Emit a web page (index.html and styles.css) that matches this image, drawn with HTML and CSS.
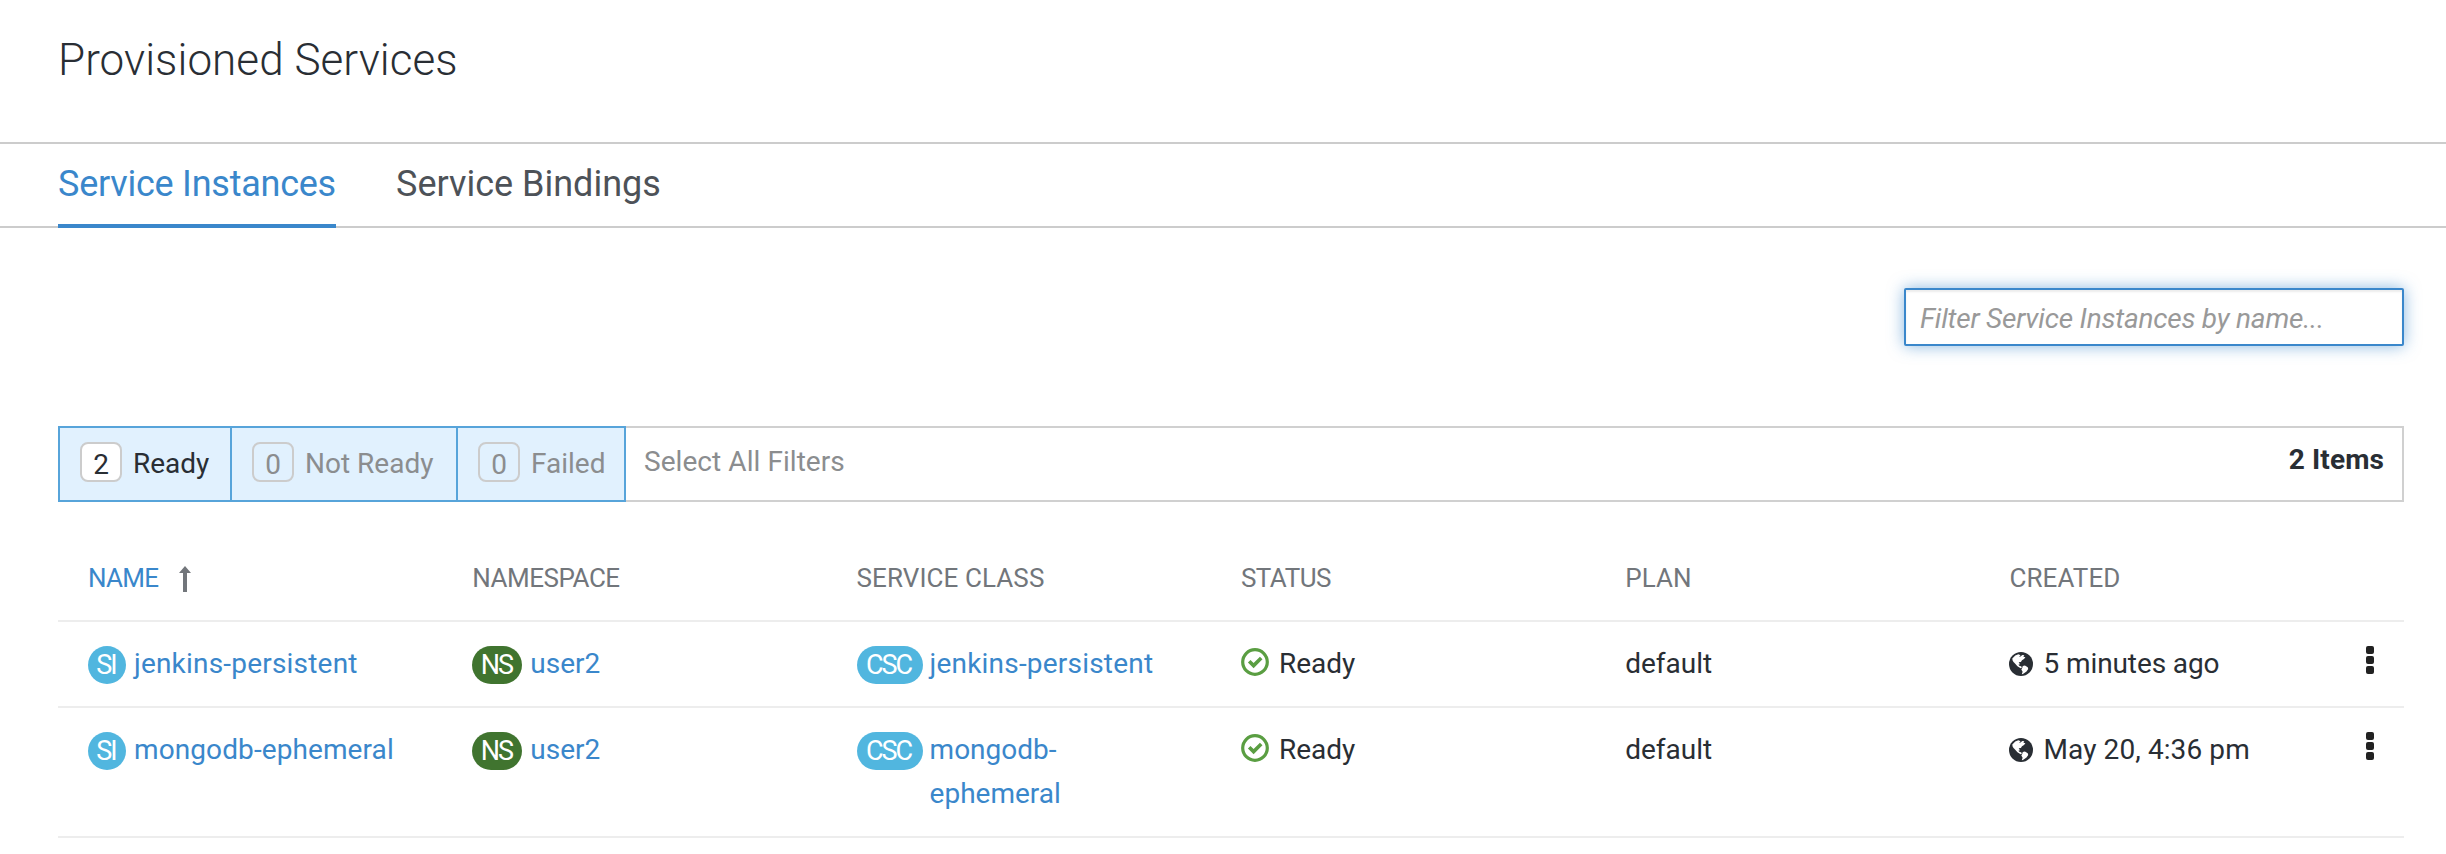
FILE: index.html
```
<!DOCTYPE html>
<html lang="en">
<head>
<meta charset="utf-8">
<title>Provisioned Services</title>
<link rel="stylesheet" href="styles.css">
</head>
<body>
<svg class="sprite" aria-hidden="true">
  <symbol id="check" viewBox="0 0 28 28">
    <circle cx="14" cy="14" r="12.3" fill="none" stroke="currentColor" stroke-width="3.2"/>
    <path d="M8.2 13.2l4.4 4.4 7.6-7.6" fill="none" stroke="currentColor" stroke-width="3.6"/>
  </symbol>
  <symbol id="globe" viewBox="0 0 1536 1536">
    <circle cx="768" cy="768" r="768" fill="currentColor"/>
    <path fill="#fff" d="M210 420L400 230 600 150 740 200 640 300 740 290 850 190 980 210 920 300 1050 340 960 440 830 530 760 640 620 660 700 780 600 820 680 900 780 910 820 1000 740 1040 540 910 400 750 290 640 230 540zM880 900L1020 870 1200 970 1230 1080 1120 1240 890 1400 820 1430 870 1260 790 1120 850 1010z"/>
  </symbol>
</svg>
<header class="page-header"><h1 class="title">Provisioned Services</h1></header>
<nav class="tabs">
  <a class="tab tab-active">Service Instances</a>
  <a class="tab">Service Bindings</a>
</nav>
<main class="content">
  <div class="toolbar"><input class="filter" type="text" placeholder="Filter Service Instances by name..."></div>
  <div class="filter-bar">
    <div class="status-filter on"><span class="count">2</span><span>Ready</span></div>
    <div class="status-filter second"><span class="count">0</span><span>Not Ready</span></div>
    <div class="status-filter third"><span class="count">0</span><span>Failed</span></div>
    <a class="select-all">Select All Filters</a>
    <span class="total">2 Items</span>
  </div>
  <div class="table">
    <div class="row head">
      <div class="cell sorted"><span class="label">NAME</span><svg class="arrow" viewBox="0 0 12 26"><path d="M6 0L12 7H8V26H4V7H0z" fill="currentColor"/></svg></div>
      <div class="cell">NAMESPACE</div>
      <div class="cell wide">SERVICE CLASS</div>
      <div class="cell">STATUS</div>
      <div class="cell wide">PLAN</div>
      <div class="cell wide">CREATED</div>
    </div>
    <div class="row">
      <div class="cell"><span class="badge si">SI</span><a class="link jenkins">jenkins-persistent</a></div>
      <div class="cell"><span class="badge ns">NS</span><a class="link">user2</a></div>
      <div class="cell"><span class="badge csc">CSC</span><a class="link jenkins">jenkins-persistent</a></div>
      <div class="cell"><svg class="check"><use href="#check"/></svg><span>Ready</span></div>
      <div class="cell"><span>default</span></div>
      <div class="cell"><svg class="globe"><use href="#globe"/></svg><span class="ago">5 minutes ago</span></div>
      <div class="kebab"><i class="dot"></i><i class="dot"></i><i class="dot"></i></div>
    </div>
    <div class="row tall">
      <div class="cell"><span class="badge si">SI</span><a class="link mongo">mongodb-ephemeral</a></div>
      <div class="cell"><span class="badge ns">NS</span><a class="link">user2</a></div>
      <div class="cell"><span class="badge csc">CSC</span><a class="link">mongodb-<br>ephemeral</a></div>
      <div class="cell"><svg class="check"><use href="#check"/></svg><span>Ready</span></div>
      <div class="cell"><span>default</span></div>
      <div class="cell"><svg class="globe"><use href="#globe"/></svg><span class="date">May 20, 4:36 pm</span></div>
      <div class="kebab"><i class="dot"></i><i class="dot"></i><i class="dot"></i></div>
    </div>
  </div>
</main>
</body>
</html>
```
FILE: styles.css
```
* { box-sizing: border-box; }
body { margin: 0; background: #fff; color: #292e34; font: 400 28px/44px Roboto, sans-serif; white-space: nowrap; overflow: hidden; }
.sprite { display: none; }
.page-header { height: 142px; padding: 32px 58px 0; }
.title { margin: 0; font-size: 44px; font-weight: 300; line-height: 56px; letter-spacing: .05px; }
.tabs { display: flex; gap: 60px; height: 86px; padding: 0 58px; border-top: 2px solid #ccc; border-bottom: 2px solid #ccc; }
.tab { height: 84px; padding-top: 18px; font-size: 36px; color: #4d5258; }
.tab-active { width: 278px; color: #3a87cb; border-bottom: 4px solid #3a87cb; letter-spacing: -.24px; }
.content { padding: 60px 42px 0 58px; }
.toolbar { display: flex; justify-content: flex-end; height: 138px; }
.filter { width: 500px; height: 58px; padding: 2px 14px 0; border: 2px solid #3a87cb; border-radius: 2px; font: 400 28px/50px Roboto, sans-serif; letter-spacing: -.22px; outline: none; box-shadow: inset 0 2px 2px rgba(0,0,0,.075), 0 0 16px rgba(58,135,203,.6); }
.filter::placeholder { color: #999; font-style: italic; opacity: 1; }
.filter-bar { display: flex; height: 76px; border: 2px solid #d0d0d0; }
.status-filter { display: flex; width: 174px; height: 76px; margin: -2px 0 0 -2px; padding: 14px 0 0 20px; color: #8b8d8f; background: #e1f1fe; border: 2px solid #57a4da; }
.on { color: #292e34; }
.second { width: 228px; }
.third { width: 170px; }
.count { width: 42px; height: 40px; margin-right: 11px; line-height: 41px; text-align: center; border: 2px solid #ccc; border-radius: 8px; }
.on .count { background: #fff; }
.select-all { padding: 12px 0 0 18px; color: #8b8d8f; letter-spacing: .06px; }
.total { margin-left: auto; padding: 10px 18px 0 0; font-weight: 700; letter-spacing: .1px; }
.row { display: grid; grid-template-columns: repeat(5, 384.3px) 1fr 38px; height: 86px; padding-left: 30px; border-bottom: 2px solid #ededed; }
.head { height: 120px; font-size: 26px; color: #72767b; letter-spacing: -.5px; }
.head .cell { padding-top: 54px; }
.head .wide { letter-spacing: .08px; }
.tall { height: 130px; }
.cell { display: flex; align-items: flex-start; padding-top: 20px; }
.label { color: #3a87cb; letter-spacing: -.7px; }
.arrow { width: 12px; height: 26px; margin: 10px 0 0 21px; }
.badge { height: 38px; margin: 4px 8px 0 0; border-radius: 19px; font-size: 27px; font-weight: 400; letter-spacing: -2px; line-height: 38px; text-align: center; text-indent: -2px; color: #fff; background: #51b6df; }
.si { width: 38px; }
.ns { width: 50px; background: #40742f; }
.csc { width: 66px; margin-right: 7px; }
.link { color: #3a87cb; }
.jenkins { letter-spacing: .2px; }
.mongo { letter-spacing: .1px; }
.ago { letter-spacing: -.1px; }
.date { letter-spacing: .1px; }
.check { width: 28px; height: 28px; margin: 6px 10px 0 0; color: #5a9e42; }
.globe { width: 24px; height: 24px; margin: 10px 10px 0 0; }
.kebab { display: flex; flex-direction: column; gap: 2px; padding-top: 24px; }
.dot { width: 8px; height: 8px; border-radius: 2px; background: #222; }
```
